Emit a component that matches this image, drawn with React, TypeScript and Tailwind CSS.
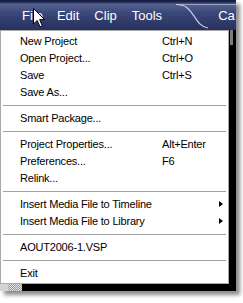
type Entry = { label: string; shortcut?: string; sub?: boolean } | "sep";

const entries: Entry[] = [
  { label: "New Project", shortcut: "Ctrl+N" },
  { label: "Open Project...", shortcut: "Ctrl+O" },
  { label: "Save", shortcut: "Ctrl+S" },
  { label: "Save As..." },
  "sep",
  { label: "Smart Package..." },
  "sep",
  { label: "Project Properties...", shortcut: "Alt+Enter" },
  { label: "Preferences...", shortcut: "F6" },
  { label: "Relink..." },
  "sep",
  { label: "Insert Media File to Timeline", sub: true },
  { label: "Insert Media File to Library", sub: true },
  "sep",
  { label: "AOUT2006-1.VSP" },
  "sep",
  { label: "Exit" },
];

function Cursor() {
  return (
    <svg
      className="absolute left-[33px] top-[8px]"
      width="13"
      height="20"
      viewBox="0 0 13 20"
    >
      <path
        d="M0.5 0.5 L0.5 16 L4.2 12.4 L7 18.8 L9.3 17.8 L6.6 11.6 L11.6 11.6 Z"
        fill="#fff"
        stroke="#000"
        strokeWidth="1"
        strokeLinejoin="miter"
      />
    </svg>
  );
}

function MenuBar() {
  return (
    <div className="relative flex h-[30px] items-center bg-[linear-gradient(180deg,#151d42_0px,#1d2650_2px,#56628f_4px,#3b4779_13px,#27325f_29px)] pl-[22px] pt-[2px] text-[13px] text-white [font-family:'Liberation_Sans',Arial,sans-serif]">
      <svg className="absolute left-0 top-0" width="236" height="30">
        <path
          d="M176 4.5 L236 4.5"
          stroke="#9aa2c2"
          strokeWidth="1"
          fill="none"
        />
        <path
          d="M176 4.5 C186 4.5 189 9 194 16 C198 22 201 27 208 28"
          stroke="#c9cde0"
          strokeWidth="1.2"
          fill="none"
        />
      </svg>
      <span className="relative">File</span>
      <span className="relative ml-[14px]">Edit</span>
      <span className="relative ml-[15px]">Clip</span>
      <span className="relative ml-[15px]">Tools</span>
      <span className="relative ml-[56px]">Ca</span>
      <Cursor />
    </div>
  );
}

function Menu() {
  return (
    <div className="flex h-[254px] w-[229px] flex-col border border-[#a8a8a8] bg-white pt-[2px] text-[11px] tracking-[-0.2px] text-black [font-family:'Liberation_Sans',Arial,sans-serif]">
      {entries.map((e, i) =>
        e === "sep" ? (
          <div key={i} className="flex h-[9px] items-center px-[2px]">
            <div className="h-px w-full bg-[#a0a0a0]" />
          </div>
        ) : (
          <div key={i} className="relative flex h-[17px] items-center pl-[19px]">
            <span className="w-[142px] whitespace-nowrap">{e.label}</span>
            {e.shortcut && <span>{e.shortcut}</span>}
            {e.sub && (
              <span className="absolute left-[218px] top-[5px] h-0 w-0 border-y-[3.5px] border-l-[4px] border-y-transparent border-l-black" />
            )}
          </div>
        )
      )}
    </div>
  );
}

export default function App() {
  return (
    <div className="h-[303px] w-[243px] overflow-hidden bg-white">
      <div className="flex h-[291px] w-[236px] flex-col bg-black shadow-[4px_4px_4px_rgba(0,0,0,0.45)]">
        <MenuBar />
        <div className="flex">
          <Menu />
          <div className="flex-1">
            <div className="ml-px h-[15px] w-[3px] bg-[#7c7c7c]" />
          </div>
        </div>
        <div className="flex h-[7px]">
          <div className="w-[8px] bg-[#d4d4d4]" />
          <div className="w-[14px] bg-[repeating-conic-gradient(#9a9a9a_0_25%,#e2e2e2_0_50%)] bg-[length:2px_2px]" />
          <div className="flex-1 bg-black" />
        </div>
      </div>
    </div>
  );
}
